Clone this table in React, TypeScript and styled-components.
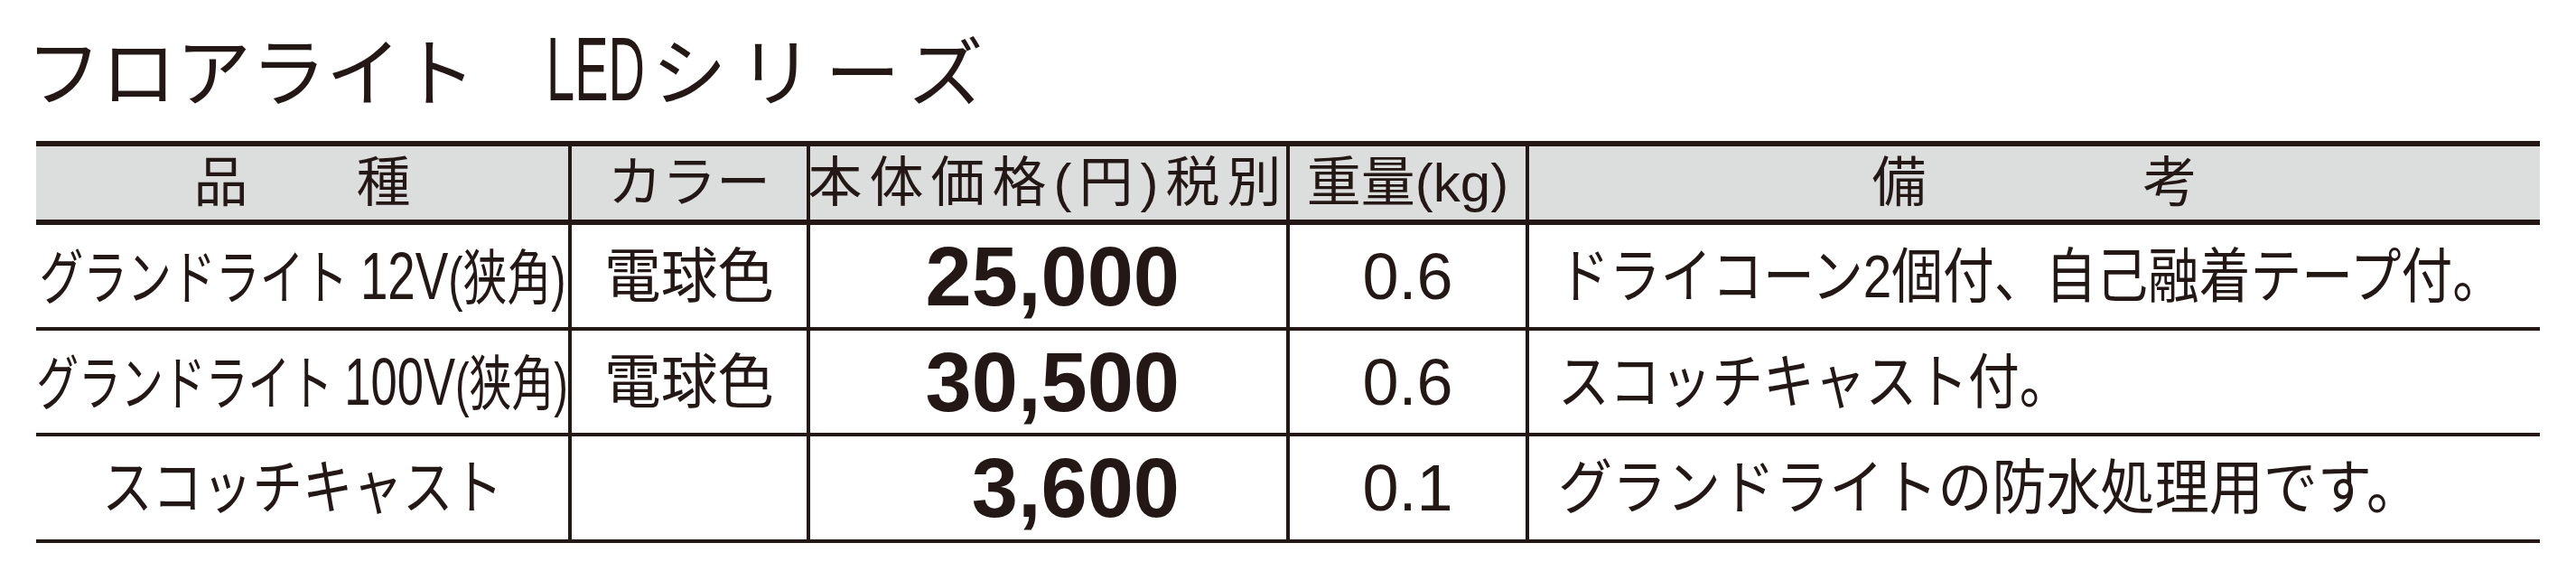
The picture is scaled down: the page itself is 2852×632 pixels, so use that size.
import styled, { createGlobalStyle } from 'styled-components'

const ink = '#231815'

const GlobalStyle = createGlobalStyle`
    body {
        margin: 0;
        background: #ffffff;
        color: ${ink};
        font-family: "Liberation Sans", "Noto Sans CJK JP", sans-serif;
    }
`

const Page = styled.div`
    padding: 0 40px;
    width: 2772px;
`

const Heading = styled.h1`
    margin: 0 0 0 -11px;
    height: 156px;
    box-sizing: border-box;
    padding: 26px 0 0 0;
    font-family: "Noto Sans CJK JP", sans-serif;
    font-size: 83px;
    font-weight: 400;
    line-height: 1;
    white-space: nowrap;
`

const Narrow = styled.span`
    display: inline-block;
    font-family: "Liberation Sans", sans-serif;
    font-size: 100px;
    transform: scaleX(0.56);
    transform-origin: left;
    margin: 0 -78px 0 78px;
`

const Spaced = styled.span`
    letter-spacing: 13px;
`

const Table = styled.div`
    width: 2772px;
    border-top: 6px solid ${ink};
    border-bottom: 4px solid ${ink};
`

const Row = styled.div<{ $head?: boolean }>`
    display: grid;
    grid-template-columns: 589px 264px 531px 265px 1123px;
    height: ${(p) => (p.$head ? 81 : 113)}px;
    background: ${(p) => (p.$head ? '#dcdddd' : '#ffffff')};
    border-bottom: ${(p) => (p.$head ? 6 : 4)}px solid ${ink};
    &:last-child {
        border-bottom: none;
        height: 114px;
    }
`

const Cell = styled.div<{ $align?: 'left' | 'center' | 'right'; $pad?: string }>`
    display: flex;
    align-items: center;
    justify-content: ${(p) =>
        p.$align === 'left' ? 'flex-start' : p.$align === 'right' ? 'flex-end' : 'center'};
    padding: ${(p) => p.$pad || '0'};
    min-width: 0;
    white-space: nowrap;
    line-height: 1;
    & + & {
        border-left: 4px solid ${ink};
    }
`

const HeadText = styled.span<{ $spacing?: number }>`
    font-family: "Liberation Sans", "Noto Sans CJK JP", sans-serif;
    font-size: 60px;
    letter-spacing: ${(p) => p.$spacing || 0}px;
`

const Squeeze = styled.span<{ $x: number; $origin?: string }>`
    display: inline-block;
    font-size: 66px;
    transform: scaleX(${(p) => p.$x});
    transform-origin: ${(p) => p.$origin || 'center'};
`

const Latin = styled.span`
    font-size: 74px;
`

const Price = styled.span`
    font-family: "Liberation Sans", sans-serif;
    font-size: 92px;
    font-weight: 700;
`

const Weight = styled.span`
    font-family: "Liberation Sans", sans-serif;
    font-size: 72px;
`

const rows = [
    {
        name: ['グランドライト ', '12V', '(狭角)'],
        nameX: 0.74,
        color: '電球色',
        price: '25,000',
        weight: '0.6',
        note: 'ドライコーン2個付、自己融着テープ付。',
        noteX: 0.86,
    },
    {
        name: ['グランドライト ', '100V', '(狭角)'],
        nameX: 0.71,
        color: '電球色',
        price: '30,500',
        weight: '0.6',
        note: 'スコッチキャスト付。',
        noteX: 0.86,
    },
    {
        name: ['スコッチキャスト', '', ''],
        nameX: 0.84,
        color: '',
        price: '3,600',
        weight: '0.1',
        note: 'グランドライトの防水処理用です。',
        noteX: 0.91,
    },
]

const App = () => {
    return (
        <Page>
            <GlobalStyle />
            <Heading>
                フロアライト<Narrow>LED</Narrow><Spaced>シリーズ</Spaced>
            </Heading>
            <Table>
                <Row $head>
                    <Cell><HeadText>品　　種</HeadText></Cell>
                    <Cell><HeadText>カラー</HeadText></Cell>
                    <Cell><HeadText $spacing={8}>本体価格(円)税別</HeadText></Cell>
                    <Cell><HeadText>重量(kg)</HeadText></Cell>
                    <Cell><HeadText>備　　　　考</HeadText></Cell>
                </Row>
                {rows.map((row) => (
                    <Row key={row.name.join('')}>
                        <Cell>
                            <Squeeze $x={row.nameX}>
                                {row.name[0]}
                                {row.name[1] && <Latin>{row.name[1]}</Latin>}
                                {row.name[2]}
                            </Squeeze>
                        </Cell>
                        <Cell>
                            <Squeeze $x={0.95}>{row.color}</Squeeze>
                        </Cell>
                        <Cell $align="right" $pad="0 118px 0 0">
                            <Price>{row.price}</Price>
                        </Cell>
                        <Cell>
                            <Weight>{row.weight}</Weight>
                        </Cell>
                        <Cell $align="left" $pad="0 0 0 32px">
                            <Squeeze $x={row.noteX} $origin="left">{row.note}</Squeeze>
                        </Cell>
                    </Row>
                ))}
            </Table>
        </Page>
    )
}

export default App
